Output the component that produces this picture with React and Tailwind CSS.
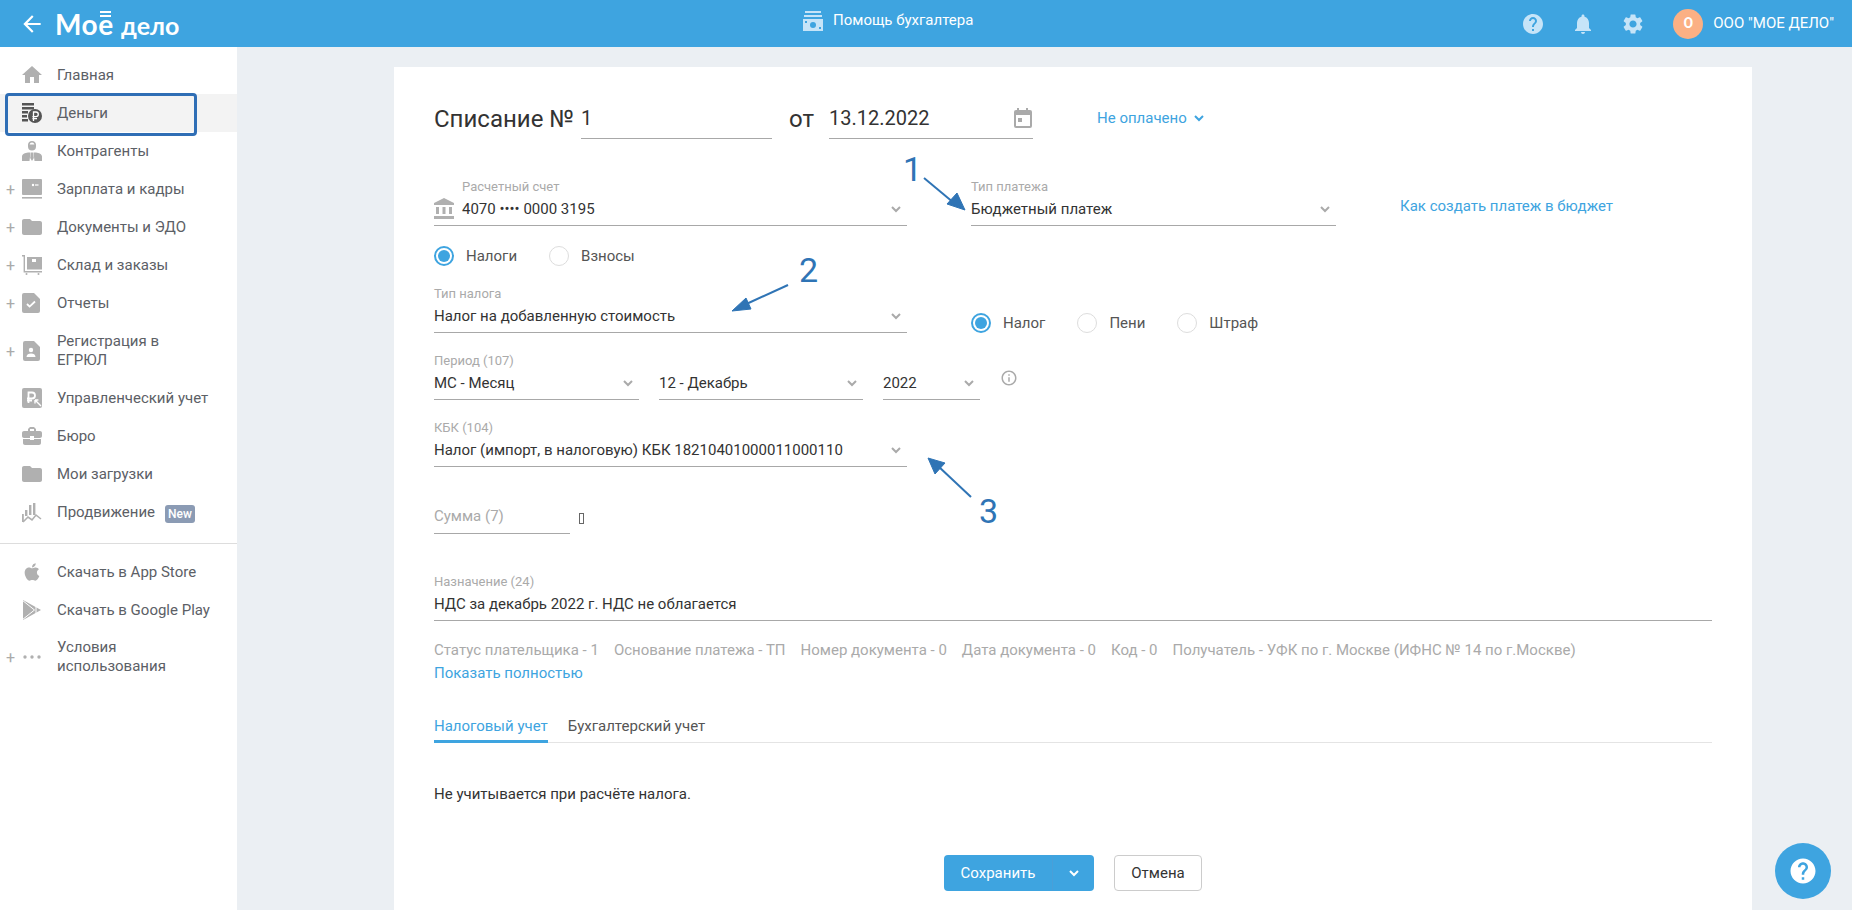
import React from 'react';
import {
  MdHome, MdFolder, MdBusinessCenter, MdHelp, MdNotifications, MdSettings,
  MdAccountBalance, MdInfoOutline, MdArrowBack,
} from 'react-icons/md';
import { FaApple } from 'react-icons/fa';

const Money = () => (
  <svg viewBox="0 0 20 20" className="w-5 h-5" fill="#555">
    <rect x="0" y="0" width="12" height="2.5" />
    <rect x="0" y="4" width="12" height="2.5" />
    <rect x="0" y="8" width="6" height="2.5" />
    <rect x="0" y="12" width="5" height="2.5" />
    <rect x="0" y="16" width="6" height="2.5" />
    <circle cx="13" cy="13" r="7" />
    <path d="M11.5 18v-9h2.5a2.3 2.3 0 0 1 0 4.6h-3.6M10.4 15.6h4.6" fill="none" stroke="#fff" strokeWidth="1.3" />
  </svg>
);

const Person = () => (
  <svg viewBox="0 0 20 20" className="w-5 h-5" fill="#b0b0b0">
    <path d="M10 0a4 4 0 0 1 4 3.500v2a4 4 0 0 1-8 0v-2A4 4 0 0 1 10 0zm0 1.600a2.600 2.600 0 0 0-2.400 2h4.800a2.600 2.600 0 0 0-2.400-2z" />
    <path d="M0 20v-4.500c0-2.500 3-3.500 6-4l2.500 0-1 8.500zM20 20v-4.500c0-2.500-3-3.500-6-4l-2.500 0 1 8.500zM9 11.500h2l.8 5.500-1.800 3-1.800-3z" />
  </svg>
);

const Wallet = () => (
  <svg viewBox="0 0 20 20" className="w-5 h-5" fill="#b0b0b0">
    <rect x="0" y="0" width="20" height="16" rx="1" />
    <path d="M0 18h20v1.600H0z" />
    <circle cx="11" cy="6" r="1.200" fill="#fff" />
    <rect x="13" y="5.400" width="3.500" height="1.200" fill="#fff" />
  </svg>
);

const Cart = () => (
  <svg viewBox="0 0 20 20" className="w-5 h-5" fill="#b0b0b0">
    <path d="M0 0h3v16h17v1.400H1.600V1.400H0z" />
    <rect x="5" y="2" width="15" height="12.500" />
    <rect x="10" y="4" width="4" height="3" fill="#fff" />
    <circle cx="4.500" cy="19" r="1" />
    <circle cx="16.500" cy="19" r="1" />
  </svg>
);

const Report = () => (
  <svg viewBox="0 0 20 20" className="w-5 h-5" fill="#b0b0b0">
    <path d="M2 0h10l6 6v12a2 2 0 0 1-2 2H2a2 2 0 0 1-2-2V2a2 2 0 0 1 2-2z" />
    <path d="M5 11l2.600 2.600L13 8.500" fill="none" stroke="#fff" strokeWidth="1.800" />
  </svg>
);

const Registry = () => (
  <svg viewBox="0 0 20 20" className="w-5 h-5" fill="#b0b0b0">
    <path d="M3 0h9l6 6v12a2 2 0 0 1-2 2H3a2 2 0 0 1-2-2V2a2 2 0 0 1 2-2z" />
    <circle cx="9" cy="9" r="2.200" fill="#fff" />
    <path d="M4.500 16c0-2.500 2-3.600 4.500-3.600s4.500 1.100 4.500 3.600z" fill="#fff" />
  </svg>
);

const Management = () => (
  <svg viewBox="0 0 20 20" className="w-5 h-5">
    <rect width="20" height="20" rx="2" fill="#b0b0b0" />
    <path d="M6.500 15V4.500H10a3 3 0 0 1 0 6H5M5 12.600h5" fill="none" stroke="#fff" strokeWidth="1.800" />
    <path d="M13 12l6 6M13 12v3.400M13 12h3.400" fill="none" stroke="#fff" strokeWidth="1.400" />
  </svg>
);

const Promo = () => (
  <svg viewBox="0 0 20 20" className="w-5 h-5" fill="#b0b0b0">
    <rect x="7" y="2" width="2.400" height="10" />
    <rect x="11" y="0" width="2.400" height="12" />
    <rect x="3" y="7" width="2.400" height="6" />
    <rect x="0" y="11" width="1.800" height="8" />
    <path d="M1 19l5-5 4 3 4-5 5 4" fill="none" stroke="#b0b0b0" strokeWidth="1.600" />
  </svg>
);

const Play = () => (
  <svg viewBox="0 0 20 20" className="w-5 h-5">
    <path d="M1 0l18 10L1 20z" fill="#b0b0b0" />
    <path d="M0 0l12.500 10L0 20M14 5l0 10" fill="none" stroke="#fff" strokeWidth="1" />
  </svg>
);

const Dots = () => (
  <svg viewBox="0 0 20 20" className="w-5 h-5" fill="#b0b0b0">
    <circle cx="3" cy="10" r="1.700" />
    <circle cx="10" cy="10" r="1.700" />
    <circle cx="17" cy="10" r="1.700" />
  </svg>
);

const Calendar = () => (
  <svg viewBox="0 0 18 20" className="w-[18px] h-5" fill="#aaa">
    <rect x="3" y="0" width="2" height="3" />
    <rect x="12" y="0" width="2" height="3" />
    <rect x="0" y="2" width="18" height="18" rx="2" />
    <rect x="2" y="7" width="14" height="11" fill="#fff" />
    <rect x="4" y="10" width="4" height="4" />
  </svg>
);

const gray = 'text-[#b0b0b0]';

const topItems = [
  { label: 'Главная', icon: <MdHome className={`w-6 h-6 -mx-0.5 ${gray}`} /> },
  { label: 'Деньги', icon: <Money />, active: true },
  { label: 'Контрагенты', icon: <Person /> },
  { label: 'Зарплата и кадры', icon: <Wallet />, plus: true },
  { label: 'Документы и ЭДО', icon: <MdFolder className={`w-6 h-6 -mx-0.5 ${gray}`} />, plus: true },
  { label: 'Склад и заказы', icon: <Cart />, plus: true },
  { label: 'Отчеты', icon: <Report />, plus: true },
  { label: 'Регистрация в\nЕГРЮЛ', icon: <Registry />, plus: true, shift: true },
  { label: 'Управленческий учет', icon: <Management /> },
  { label: 'Бюро', icon: <MdBusinessCenter className={`w-6 h-6 -mx-0.5 ${gray}`} /> },
  { label: 'Мои загрузки', icon: <MdFolder className={`w-6 h-6 -mx-0.5 ${gray}`} /> },
  { label: 'Продвижение', icon: <Promo />, badge: 'New' },
];

const bottomItems = [
  { label: 'Скачать в App Store', icon: <FaApple className={`w-5 h-5 ${gray}`} /> },
  { label: 'Скачать в Google Play', icon: <Play /> },
  { label: 'Условия\nиспользования', icon: <Dots />, plus: true },
];

const SideItem = ({ item }) => (
  <div className={`flex items-center py-[9px] ${item.active ? 'bg-[#f3f3f3]' : ''} ${item.shift ? 'mt-px' : ''}`}>
    <span className="w-[22px] pl-[6px] text-[16px] leading-[19px] text-[#aaa]">{item.plus ? '+' : ''}</span>
    <span className="w-5 h-5 flex items-center justify-center">{item.icon}</span>
    <span className="ml-[15px] text-[15px] leading-[19px] text-[#5c6066] whitespace-pre-line">{item.label}</span>
    {item.badge && (
      <span className="ml-[10px] mt-[3px] w-[30px] h-[18px] rounded-[3px] bg-[#8b9bb4] text-white text-[12px] leading-[18px] font-medium text-center">
        {item.badge}
      </span>
    )}
  </div>
);

const Chevron = ({ className = 'text-[#aaa]' }) => (
  <span className={`w-[18px] h-[18px] flex items-center justify-center ${className}`}>
    <svg viewBox="0 0 10 7" className="w-[10px] h-[7px]" fill="none" stroke="currentColor" strokeWidth="2">
      <path d="M1 1l4 4 4-4" />
    </svg>
  </span>
);

const Field = ({ label, value, width, icon }) => (
  <div className={`${width} h-[47px] border-b border-[#a8a8a8] flex items-start`}>
    {icon && <span className="mt-[20px] mr-2 w-5 h-5 flex items-center justify-center">{icon}</span>}
    <div className="flex-1 min-w-0">
      <div className="text-[13px] leading-4 h-4 text-[#aaa]">{label}</div>
      <div className="mt-1 pr-[2px] flex items-center justify-between text-[15px] leading-5 text-[#333]">
        <span className="whitespace-nowrap">{value}</span>
        <Chevron />
      </div>
    </div>
  </div>
);

const Radio = ({ label, checked, className = '' }) => (
  <div className={`flex items-center h-5 ${className}`}>
    {checked ? (
      <span className="w-5 h-5 rounded-full border-2 border-[#3ea4e0] flex items-center justify-center">
        <span className="w-3 h-3 rounded-full bg-[#3ea4e0]" />
      </span>
    ) : (
      <span className="w-5 h-5 rounded-full border border-[#ddd]" />
    )}
    <span className="ml-3 text-[15px] text-[#555]">{label}</span>
  </div>
);

const Num = ({ className, children }) => (
  <span className={`absolute text-[#2f74b5] text-[34px] leading-[40px] font-normal ${className}`}>{children}</span>
);

export default function App() {
  return (
    <div className="relative h-screen flex flex-col overflow-hidden font-['Roboto',sans-serif] bg-[#ebeff3]">
      <header className="h-[47px] shrink-0 bg-[#3ea4e0] flex items-center text-white">
        <MdArrowBack className="ml-[19px] w-[26px] h-[26px]" />
        <div className="ml-[10px] w-[130px] flex items-baseline font-['Lato',sans-serif] leading-none font-bold">
          <span className="text-[28px] tracking-[0.5px]">Мо</span>
          <span className="relative text-[28px]">
            е
            <span className="absolute left-[2px] right-[2px] top-[1px] h-[2px] bg-white" />
            <span className="absolute left-[2px] right-[2px] top-[5px] h-[2px] bg-white" />
          </span>
          <span className="ml-[8px] text-[25px]">дело</span>
        </div>
        <div className="ml-[618px] flex items-center -mt-[6px]">
          <svg viewBox="0 0 20 20" className="w-5 h-5" fill="#c6e4f8">
            <rect x="2" y="0" width="16" height="2" />
            <rect x="1" y="4" width="18" height="2" />
            <path d="M0 8h20v12H0z" />
            <circle cx="10" cy="14" r="3" fill="#3ea4e0" />
            <rect x="2" y="10" width="2" height="2" fill="#3ea4e0" />
            <rect x="16" y="16" width="2" height="2" fill="#3ea4e0" />
          </svg>
          <span className="ml-[10px] text-[15px]">Помощь бухгалтера</span>
        </div>
        <div className="ml-auto flex items-center">
          <MdHelp className="w-6 h-6 text-[#c6e4f8]" />
          <MdNotifications className="ml-[26px] w-6 h-6 text-[#c6e4f8]" />
          <MdSettings className="ml-[26px] w-6 h-6 text-[#c6e4f8]" />
          <span className="ml-[28px] w-[30px] h-[30px] rounded-full bg-[#fbb084] flex items-center justify-center text-[14px] font-bold">О</span>
          <span className="ml-[10px] mr-[18px] text-[15px]">ООО "МОЕ ДЕЛО"</span>
        </div>
      </header>

      <div className="flex-1 flex min-h-0">
        <aside className="w-[237px] shrink-0 bg-white pt-[9px]">
          {topItems.map((item) => <SideItem key={item.label} item={item} />)}
          <div className="mt-[11px] mb-[9px] border-t border-[#ddd]" />
          {bottomItems.map((item) => <SideItem key={item.label} item={item} />)}
        </aside>

        <main className="flex-1 pl-[157px] pt-5">
          <div className="w-[1358px] h-full bg-white pl-10 pr-10 pt-[31px]">
            <div className="flex items-center h-[41px] text-[#333]">
              <span className="w-[147px] text-[24px] whitespace-nowrap">Списание №</span>
              <span className="w-[191px] h-[41px] border-b border-[#a8a8a8] flex items-center text-[20px]">1</span>
              <span className="ml-[17px] w-[40px] text-[24px]">от</span>
              <span className="w-[204px] h-[41px] border-b border-[#a8a8a8] flex items-center justify-between text-[20px]">
                13.12.2022
                <span className="mr-px"><Calendar /></span>
              </span>
              <span className="ml-[64px] flex items-center text-[15px] text-[#3ea4e0]">
                Не оплачено
                <Chevron className="ml-[3px] text-[#3ea4e0]" />
              </span>
            </div>

            <div className="mt-10 flex items-start">
              <Field
                width="w-[473px]"
                label="Расчетный счет"
                value="4070 •••• 0000 3195"
                icon={<MdAccountBalance className={`w-6 h-6 shrink-0 ${gray}`} />}
              />
              <div className="ml-16">
                <Field width="w-[365px]" label="Тип платежа" value="Бюджетный платеж" />
              </div>
              <a className="ml-16 mt-[17px] text-[15px] leading-5 text-[#3ea4e0]">Как создать платеж в бюджет</a>
            </div>

            <div className="mt-5 flex">
              <Radio label="Налоги" checked />
              <Radio label="Взносы" className="ml-[32px]" />
            </div>

            <div className="mt-5 flex items-end">
              <Field width="w-[473px]" label="Тип налога" value="Налог на добавленную стоимость" />
              <Radio label="Налог" checked className="ml-16" />
              <Radio label="Пени" className="ml-[32px]" />
              <Radio label="Штраф" className="ml-[32px]" />
            </div>

            <div className="mt-5 flex items-start gap-5">
              <Field width="w-[205px]" label="Период (107)" value="МС - Месяц" />
              <Field width="w-[204px]" label="" value="12 - Декабрь" />
              <Field width="w-[97px]" label="" value="2022" />
              <MdInfoOutline className="mt-[16px] w-[18px] h-[18px] text-[#aaa]" />
            </div>

            <div className="mt-5">
              <Field width="w-[473px]" label="КБК (104)" value="Налог (импорт, в налоговую) КБК 18210401000011000110" />
            </div>

            <div className="mt-10 flex items-center">
              <div className="w-[136px] h-[27px] border-b border-[#a8a8a8] text-[15px] leading-[18px] text-[#aaa]">Сумма (7)</div>
              <span className="ml-[9px] -mt-[4px] w-[5px] h-[11px] border border-[#666]" />
            </div>

            <div className="mt-10">
              <div className="h-[47px] border-b border-[#a8a8a8]">
                <div className="text-[13px] leading-4 text-[#aaa]">Назначение (24)</div>
                <div className="mt-1 text-[15px] leading-5 text-[#333]">НДС за декабрь 2022 г. НДС не облагается</div>
              </div>
            </div>

            <div className="mt-[19px] flex gap-[15px] text-[15px] leading-5 text-[#aaa] whitespace-nowrap">
              <span>Статус плательщика - 1</span>
              <span>Основание платежа - ТП</span>
              <span>Номер документа - 0</span>
              <span>Дата документа - 0</span>
              <span>Код - 0</span>
              <span>Получатель - УФК по г. Москве (ИФНС № 14 по г.Москве)</span>
            </div>
            <div className="mt-[3px] text-[15px] leading-5 text-[#3ea4e0]">Показать полностью</div>

            <div className="mt-[33px] flex h-[27px] border-b border-[#e4e4e4] text-[15px] leading-5">
              <span className="h-[27px] border-b-[3px] border-[#3ea4e0] text-[#3ea4e0]">Налоговый учет</span>
              <span className="ml-5 text-[#555]">Бухгалтерский учет</span>
            </div>

            <div className="mt-[41px] text-[15px] leading-5 text-[#333]">Не учитывается при расчёте налога.</div>

            <div className="mt-[51px] flex justify-center">
              <div className="flex h-9 rounded-[4px] bg-[#3ea4e0] text-white text-[15px]">
                <span className="w-[108px] flex items-center justify-center">Сохранить</span>
                <span className="w-[42px] border-l border-[#4a9fd8] flex items-center justify-center">
                  <Chevron className="text-white" />
                </span>
              </div>
              <span className="ml-5 w-[88px] h-9 rounded-[4px] border border-[#ccc] flex items-center justify-center text-[15px] text-[#333]">
                Отмена
              </span>
            </div>
          </div>
        </main>
      </div>

      {/* annotations drawn on top of the screenshot */}
      <div className="absolute left-[5px] top-[93px] w-[192px] h-[43px] rounded-[4px] border-[3px] border-[#2f6eb5]" />
      <Num className="left-[903px] top-[149px]">1</Num>
      <Num className="left-[799px] top-[250px]">2</Num>
      <Num className="left-[979px] top-[491px]">3</Num>
      <svg className="absolute inset-0 pointer-events-none" width="1852" height="910" fill="#2f74b5" stroke="#2f74b5">
        <path d="M924 178L954 203" strokeWidth="2" />
        <path d="M965 210L947 204L957 193z" strokeWidth="1" />
        <path d="M788 285L742 306" strokeWidth="2" />
        <path d="M732 311L746 298L751 309z" strokeWidth="1" />
        <path d="M971 497L938 466" strokeWidth="2" />
        <path d="M928 458L945 463L935 474z" strokeWidth="1" />
      </svg>

      <div className="absolute right-[21px] bottom-[11px] w-14 h-14 rounded-full bg-[#3ea4e0] flex items-center justify-center">
        <MdHelp className="w-[30px] h-[30px] text-white" />
      </div>
    </div>
  );
}
